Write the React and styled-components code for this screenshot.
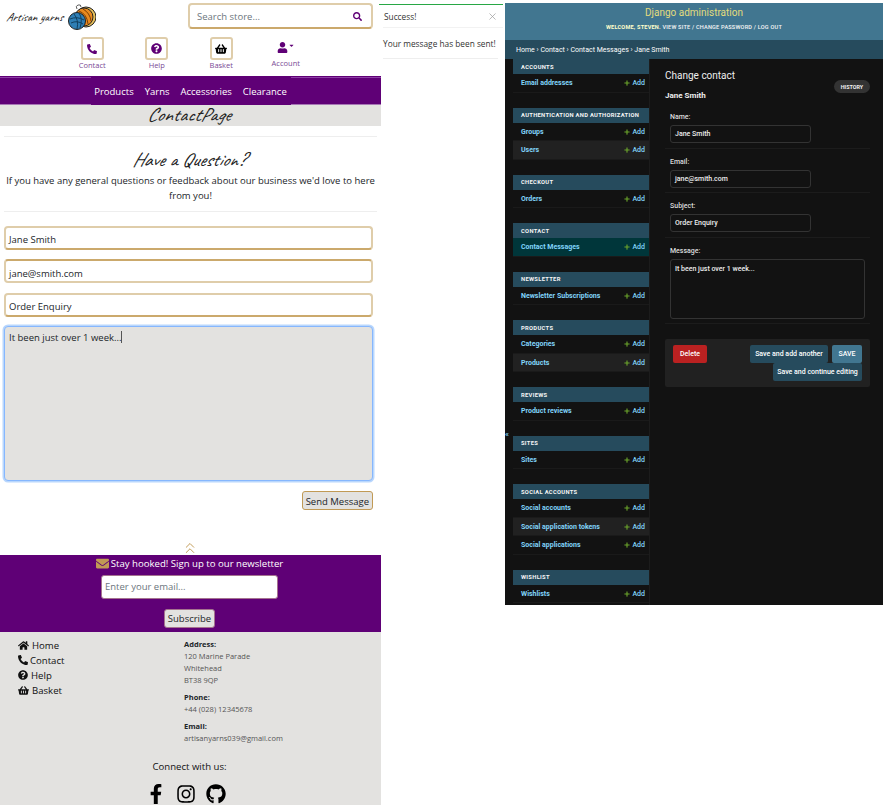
import React from 'react';
import styled, { createGlobalStyle } from 'styled-components';
import {
  FaPhoneAlt, FaQuestionCircle, FaShoppingBasket, FaUser, FaCaretDown, FaSearch, FaHome,
  FaEnvelope, FaFacebookF, FaInstagram, FaGithub, FaPlus,
} from 'react-icons/fa';
import { ChevronsUp, X } from 'lucide-react';

const PURPLE = '#5f0076';
const TAN = '#c19a55';
const MID_TAN = '#cba96c';
const LIGHT_TAN = '#dfcdaa';
const GREY = '#e3e2e0';
const SCRIPT = '"Caveat", "Liberation Serif", cursive';

const GlobalStyle = createGlobalStyle`
  html, body { margin: 0; padding: 0; background: #fff; }
  * { box-sizing: border-box; }
  body { font-family: "Open Sans", "Noto Sans", sans-serif; color: #212529; }
`;

// --- page shell ---
const Screen = styled.div`
  width: 889px;
  height: 809px;
  overflow: hidden;
  display: flex;
  align-items: flex-start;
`;

// --- shop page ---
const Shop = styled.div`
  width: 381px;
  flex: none;
`;

const Header = styled.header`
  height: 76px;
  display: flex;
  flex-direction: column;
`;

const TopRow = styled.div`
  display: flex;
  justify-content: space-between;
  padding: 3px 8px 0 6px;
  height: 37px;
`;

const Logo = styled.div`
  display: flex;
  align-items: center;
  gap: 5px;
  height: 27px;
`;

const LogoText = styled.span`
  font-family: ${SCRIPT};
  font-style: italic;
  font-size: 12px;
  color: #111;
  width: 57px;
  white-space: nowrap;
`;

const SearchBox = styled.div`
  width: 185px;
  height: 26px;
  border: 2px solid ${LIGHT_TAN};
  border-bottom-color: ${MID_TAN};
  border-radius: 4px;
  display: flex;
  align-items: center;
  justify-content: space-between;
  padding: 0 9px 0 7px;
  font-size: 9.5px;
  color: #6c757d;
  svg { color: ${PURPLE}; }
`;

const IconRow = styled.nav`
  display: flex;
  padding-left: 60px;
`;

const IconLink = styled.a`
  width: 64.5px;
  display: flex;
  flex-direction: column;
  align-items: center;
  font-size: 7.5px;
  line-height: 10px;
  color: #7a4a95;
`;

const IconBox = styled.span`
  width: 23px;
  height: 23px;
  border: 2px solid ${LIGHT_TAN};
  border-radius: 3px;
  display: flex;
  align-items: center;
  justify-content: center;
  color: ${p => p.$dark ? '#000' : PURPLE};
`;

const AccountIcon = styled.span`
  height: 21px;
  padding-top: 5px;
  display: flex;
  align-items: flex-start;
  justify-content: center;
  color: ${PURPLE};
`;

const MainNav = styled.nav`
  height: 29px;
  background: ${PURPLE};
  display: flex;
  justify-content: center;
`;

const NavEdge = styled.span`
  flex: 1;
  border-top: 1px solid #8d3fa5;
  border-bottom: 1px solid #a777b5;
  margin-top: 1px;
`;

const NavList = styled.div`
  width: 200px;
  display: flex;
  justify-content: center;
  align-items: center;
  gap: 11px;
  padding-top: 1px;
  color: #fff;
  font-size: 9.5px;
`;

const Band = styled.div`
  height: 21px;
  background: ${GREY};
  margin-bottom: 10px;
  padding-right: 4px;
  text-align: center;
  font-family: ${SCRIPT};
  font-style: italic;
  font-size: 19.7px;
  line-height: 19px;
  color: #222;
`;

const Rule = styled.hr`
  border: 0;
  border-top: 1px solid #eee;
  margin: 0 4px;
`;

const Intro = styled.section`
  text-align: center;
  padding: 12px 4px 8px;
  font-size: 9.5px;
  line-height: 15px;
`;

const Heading = styled.h2`
  margin: 0 0 3px;
  padding-right: 4px;
  font-family: ${SCRIPT};
  font-style: italic;
  font-weight: 400;
  font-size: 19.5px;
  line-height: 21px;
  color: #222;
`;

const ContactForm = styled.form`
  padding: 14px 8px 0 4px;
  display: flex;
  flex-direction: column;
  gap: 9.9px;
`;

const Field = styled.div`
  height: 23.6px;
  border: 2px solid ${LIGHT_TAN};
  border-${p => p.$edge}-color: ${MID_TAN};
  border-radius: 4px;
  padding: 4px 3px 0;
  display: flex;
  align-items: center;
  font-size: 9.5px;
  color: #212529;
`;

const MessageArea = styled.div`
  height: 154.5px;
  background: ${GREY};
  border: 1px solid #86b7fe;
  box-shadow: 0 0 0 1.5px #b9d7fd;
  border-radius: 4px;
  padding: 4px 4px;
  font-size: 9.5px;
  line-height: 14px;
`;

const Caret = styled.span`
  display: inline-block;
  width: 1px;
  height: 12px;
  background: #555;
  vertical-align: -2px;
`;

const FormActions = styled.div`
  display: flex;
  justify-content: flex-end;
`;

const TanButton = styled.span`
  display: inline-block;
  height: 19px;
  background: ${GREY};
  border: 1px solid ${p => p.$border || TAN};
  border-radius: 3px;
  font-size: 9.5px;
  line-height: ${p => p.$line || 19}px;
  padding: 0 3px;
  color: #212529;
`;

const BackTop = styled.div`
  height: 45px;
  padding-right: 2px;
  display: flex;
  justify-content: center;
  align-items: flex-end;
  color: ${TAN};
  svg { margin-bottom: -2.5px; }
`;

const Newsletter = styled.section`
  position: relative;
  height: 77px;
  background: ${PURPLE};
  display: flex;
  flex-direction: column;
  align-items: center;
  padding: 2px 2px 0 0;
  color: #fff;
  font-size: 9.6px;
`;

const NewsTitle = styled.div`
  display: flex;
  align-items: center;
  gap: 2px;
  height: 14px;
  svg { color: ${TAN}; }
`;

const NewsInput = styled.div`
  width: 177px;
  height: 24px;
  margin-top: 4px;
  background: #fff;
  border: 1px solid #a5738f;
  border-radius: 3px;
  color: #6c757d;
  padding: 0 3px;
  display: flex;
  align-items: center;
  font-size: 9.5px;
`;

const SubscribeWrap = styled.div`
  margin-top: 10px;
`;

const Footer = styled.footer`
  height: 173px;
  background: ${GREY};
  overflow: hidden;
  display: flex;
  flex-direction: column;
`;

const FooterCols = styled.div`
  display: flex;
  padding: 6px 0 0 18px;
`;

const FooterLinks = styled.ul`
  list-style: none;
  margin: 0;
  padding: 0;
  width: 166px;
  font-size: 9.6px;
  line-height: 15px;
  color: #111;
`;

const FooterLink = styled.li`
  display: flex;
  align-items: center;
  gap: ${p => p.$gap || 3}px;
  svg { color: #111; }
`;

const Address = styled.div`
  font-size: 7.5px;
  line-height: 12px;
  color: #555;
`;

const AddressBlock = styled.p`
  margin: 0 0 5px;
`;

const AddressLabel = styled.strong`
  display: block;
  color: #212529;
  font-weight: 700;
`;

const Connect = styled.div`
  margin-top: 11px;
  padding-right: 2px;
  text-align: center;
  font-size: 9.6px;
  line-height: 14px;
  color: #111;
`;

const Socials = styled.div`
  display: flex;
  justify-content: center;
  align-items: center;
  gap: 10px;
  margin-top: 10px;
  padding-right: 9px;
  color: #000;
`;

// --- toast ---
const Toast = styled.aside`
  width: 124px;
  flex: none;
  margin: 4px 0 0 -2px;
  border-top: 1px solid #28a745;
  font-size: 8.3px;
  color: #333;
`;

const ToastHead = styled.div`
  height: 23px;
  margin-left: 4px;
  padding: 0 5px 0 1px;
  display: flex;
  align-items: center;
  justify-content: space-between;
  border-bottom: 1px solid #f2f2f2;
  svg { color: #999; }
`;

const ToastBody = styled.div`
  height: 31px;
  margin: 0 5px 0 4px;
  padding-top: 10px;
  white-space: nowrap;
  border-bottom: 1px solid #eee;
`;

// --- django admin ---
const Admin = styled.div`
  width: 378px;
  height: 602px;
  flex: none;
  margin: 3px 0 0 2px;
  background: #121212;
  font-family: Roboto, sans-serif;
  font-size: 7px;
  font-weight: 500;
  color: #eee;
  display: flex;
  flex-direction: column;
`;

const AdminTop = styled.div`
  height: 37px;
  background: #417690;
  text-align: center;
  padding-top: 3px;
`;

const Brand = styled.div`
  font-size: 10px;
  font-weight: 400;
  color: #e3dc7c;
  line-height: 13px;
`;

const UserTools = styled.div`
  margin-top: 5px;
  font-size: 5.6px;
  font-weight: 700;
  letter-spacing: 0.2px;
  color: #ffc;
  text-transform: uppercase;
`;

const ToolLink = styled.span`
  color: #f5f5f5;
  font-weight: 500;
`;

const Breadcrumbs = styled.div`
  height: 19px;
  background: #264b5d;
  color: #fff;
  padding: 0 11px;
  display: flex;
  align-items: center;
  font-weight: 400;
`;

const AdminMain = styled.div`
  flex: 1;
  display: flex;
  min-height: 0;
`;

const Toggle = styled.div`
  width: 8px;
  flex: none;
  padding-top: 372px;
  color: #81d4fa;
  font-size: 8px;
  line-height: 8px;
`;

const Sidebar = styled.div`
  width: 137px;
  flex: none;
  border-right: 1px solid #1c1c1c;
`;

const AppModule = styled.div`
  margin-bottom: 15px;
`;

const AppTitle = styled.div`
  height: 15px;
  background: #264b5d;
  color: #f5f5f5;
  font-size: 5.8px;
  font-weight: 700;
  letter-spacing: 0.3px;
  text-transform: uppercase;
  padding-left: 8px;
  display: flex;
  align-items: center;
`;

const ModelRow = styled.div`
  height: 18.5px;
  padding: 1px 4px 0 8px;
  display: flex;
  align-items: center;
  justify-content: space-between;
  color: #81d4fa;
  font-size: 7px;
  font-weight: 700;
  border-bottom: 1px solid #1a1a1a;
  background: ${p => p.$current ? '#00363a' : p.$alt ? '#212121' : 'transparent'};
`;

const AddLink = styled.span`
  display: flex;
  align-items: center;
  gap: 2px;
  font-weight: 500;
  svg { color: #6ca62c; }
`;

const Content = styled.div`
  flex: 1;
  padding: 10px 13px 0 15px;
  position: relative;
`;

const Title = styled.h1`
  margin: 0;
  font-size: 10px;
  font-weight: 400;
  line-height: 13px;
  color: #eee;
`;

const SubTitle = styled.h2`
  margin: 8px 0 3px;
  font-size: 8px;
  font-weight: 700;
  line-height: 11px;
  color: #eee;
`;

const HistoryPill = styled.span`
  position: absolute;
  top: 21px;
  right: 13px;
  height: 13px;
  width: 36px;
  border-radius: 7px;
  background: #333;
  color: #eee;
  font-size: 5.4px;
  font-weight: 700;
  display: flex;
  align-items: center;
  justify-content: center;
`;

const FormRow = styled.div`
  padding: 8.5px 5px 0;
  border-bottom: 1px solid #1c1c1c;
  height: ${p => p.$h}px;
`;

const FieldLabel = styled.div`
  font-size: 7px;
  line-height: 9px;
  margin-bottom: 3px;
  color: #ddd;
`;

const AdminField = styled.div`
  width: ${p => p.$w}px;
  height: ${p => p.$h}px;
  border: 1px solid #333;
  border-radius: 3px;
  padding: ${p => p.$multi ? '5px 4px' : '1px 4px 0'};
  display: flex;
  align-items: ${p => p.$multi ? 'flex-start' : 'center'};
  color: #eee;
  font-size: 7px;
`;

const SubmitRow = styled.div`
  margin-top: 15px;
  height: 48px;
  background: #212121;
  border-radius: 2px;
  padding: 6px 8px;
  display: flex;
  justify-content: space-between;
  align-items: flex-start;
`;

const DangerButton = styled.span`
  width: 34px;
  height: 18px;
  background: #ba2121;
  color: #fff;
  border-radius: 2px;
  display: flex;
  align-items: center;
  justify-content: center;
`;

const SaveGroup = styled.div`
  width: 130px;
  display: flex;
  flex-wrap: wrap;
  justify-content: flex-end;
  column-gap: 4px;
`;

const SaveButton = styled.span`
  width: ${p => p.$w}px;
  height: 18px;
  background: ${p => p.$primary ? '#417690' : '#264b5d'};
  color: #fff;
  border-radius: 2px;
  display: flex;
  align-items: center;
  justify-content: center;
`;

const modules = [
  ['Accounts', [['Email addresses']]],
  ['Authentication and Authorization', [['Groups'], ['Users', 'alt']]],
  ['Checkout', [['Orders']]],
  ['Contact', [['Contact Messages', 'current']]],
  ['Newsletter', [['Newsletter Subscriptions']]],
  ['Products', [['Categories'], ['Products', 'alt']]],
  ['Reviews', [['Product reviews']]],
  ['Sites', [['Sites']]],
  ['Social Accounts', [['Social accounts'], ['Social application tokens', 'alt'], ['Social applications']]],
  ['Wishlist', [['Wishlists']]],
];

const fields = [
  ['Name:', 'Jane Smith', 141, 18, 45],
  ['Email:', 'jane@smith.com', 141, 18, 44],
  ['Subject:', 'Order Enquiry', 141, 18, 45],
  ['Message:', 'It been just over 1 week...', 195, 60, 86],
];

const YarnLogo = () => (
  <svg width="28" height="26" viewBox="0 0 28 26">
    <circle cx="18" cy="13" r="10" fill="#e8c15a" stroke="#222" strokeWidth="1" />
    <circle cx="16" cy="13" r="9" fill="#e98a1f" stroke="#222" strokeWidth="1" />
    <path d="M11 7q8 3 9 13M15 5q7 4 8 12M9 11q6 2 8 11" fill="none" stroke="#7a3f08" strokeWidth="1" />
    <circle cx="9" cy="17" r="8.5" fill="#2f7fb5" stroke="#222" strokeWidth="1" />
    <path d="M2 15q7-3 14 1M3 19q6-3 12 1M6 10q5 6 3 15M11 9q4 6 1 15" fill="none" stroke="#123f5e" strokeWidth="1" />
    <path d="M9 5q-2-3 1-4t3 2" fill="none" stroke="#333" strokeWidth="0.8" />
  </svg>
);

const App = () => (
  <Screen>
    <GlobalStyle />
    <Shop>
      <Header>
        <TopRow>
          <Logo>
            <LogoText>Artisan yarns</LogoText>
            <YarnLogo />
          </Logo>
          <SearchBox>
            Search store...
            <FaSearch size={9} />
          </SearchBox>
        </TopRow>
        <IconRow>
          <IconLink><IconBox><FaPhoneAlt size={10} /></IconBox>Contact</IconLink>
          <IconLink><IconBox><FaQuestionCircle size={11} /></IconBox>Help</IconLink>
          <IconLink><IconBox $dark><FaShoppingBasket size={12} /></IconBox>Basket</IconLink>
          <IconLink>
            <AccountIcon><FaUser size={11} /><FaCaretDown size={7} /></AccountIcon>
            Account
          </IconLink>
        </IconRow>
      </Header>
      <MainNav>
        <NavEdge />
        <NavList>
          <span>Products</span>
          <span>Yarns</span>
          <span>Accessories</span>
          <span>Clearance</span>
        </NavList>
        <NavEdge />
      </MainNav>
      <Band>ContactPage</Band>
      <Rule />
      <Intro>
        <Heading>Have a Question?</Heading>
        If you have any general questions or feedback about our business we'd love to here from you!
      </Intro>
      <Rule />
      <ContactForm>
        <Field $edge="bottom">Jane Smith</Field>
        <Field $edge="top">jane@smith.com</Field>
        <Field $edge="bottom">Order Enquiry</Field>
        <MessageArea>It been just over 1 week...<Caret /></MessageArea>
        <FormActions><TanButton>Send Message</TanButton></FormActions>
      </ContactForm>
      <BackTop><ChevronsUp size={18} strokeWidth={1.3} /></BackTop>
      <Newsletter>
        <NewsTitle><FaEnvelope size={13} />Stay hooked! Sign up to our newsletter</NewsTitle>
        <NewsInput>Enter your email...</NewsInput>
        <SubscribeWrap><TanButton $border="#a5738f" $line={17}>Subscribe</TanButton></SubscribeWrap>
      </Newsletter>
      <Footer>
        <FooterCols>
          <FooterLinks>
            <FooterLink><FaHome size={11} />Home</FooterLink>
            <FooterLink $gap={2}><FaPhoneAlt size={10} />Contact</FooterLink>
            <FooterLink $gap={3}><FaQuestionCircle size={10} />Help</FooterLink>
            <FooterLink><FaShoppingBasket size={11} />Basket</FooterLink>
          </FooterLinks>
          <Address>
            <AddressBlock>
              <AddressLabel>Address:</AddressLabel>
              120 Marine Parade<br />Whitehead<br />BT38 9QP
            </AddressBlock>
            <AddressBlock>
              <AddressLabel>Phone:</AddressLabel>
              +44 (028) 12345678
            </AddressBlock>
            <AddressBlock>
              <AddressLabel>Email:</AddressLabel>
              artisanyarns039@gmail.com
            </AddressBlock>
          </Address>
        </FooterCols>
        <Connect>Connect with us:</Connect>
        <Socials>
          <FaFacebookF size={20} />
          <FaInstagram size={20} />
          <FaGithub size={20} />
        </Socials>
      </Footer>
    </Shop>

    <Toast>
      <ToastHead>Success!<X size={11} strokeWidth={1.5} /></ToastHead>
      <ToastBody>Your message has been sent!</ToastBody>
    </Toast>

    <Admin>
      <AdminTop>
        <Brand>Django administration</Brand>
        <UserTools>
          Welcome, Steven. <ToolLink>View site / Change password / Log out</ToolLink>
        </UserTools>
      </AdminTop>
      <Breadcrumbs>Home › Contact › Contact Messages › Jane Smith</Breadcrumbs>
      <AdminMain>
        <Toggle>«</Toggle>
        <Sidebar>
          {modules.map(([name, rows]) => (
            <AppModule key={name}>
              <AppTitle>{name}</AppTitle>
              {rows.map(([label, kind]) => (
                <ModelRow key={label} $alt={kind === 'alt'} $current={kind === 'current'}>
                  {label}
                  <AddLink><FaPlus size={6} />Add</AddLink>
                </ModelRow>
              ))}
            </AppModule>
          ))}
        </Sidebar>
        <Content>
          <Title>Change contact</Title>
          <HistoryPill>HISTORY</HistoryPill>
          <SubTitle>Jane Smith</SubTitle>
          {fields.map(([label, value, w, h, rowH]) => (
            <FormRow key={label} $h={rowH}>
              <FieldLabel>{label}</FieldLabel>
              <AdminField $w={w} $h={h} $multi={h > 20}>{value}</AdminField>
            </FormRow>
          ))}
          <SubmitRow>
            <DangerButton>Delete</DangerButton>
            <SaveGroup>
              <SaveButton $w={78}>Save and add another</SaveButton>
              <SaveButton $w={30} $primary>SAVE</SaveButton>
              <SaveButton $w={89}>Save and continue editing</SaveButton>
            </SaveGroup>
          </SubmitRow>
        </Content>
      </AdminMain>
    </Admin>
  </Screen>
);

export default App;
